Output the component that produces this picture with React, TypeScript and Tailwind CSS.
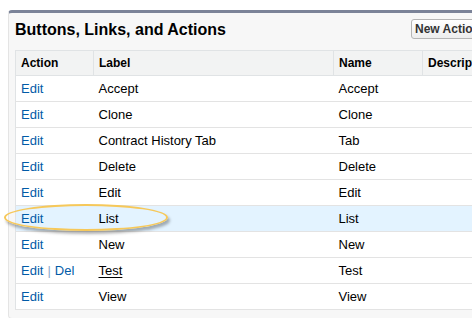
import React from "react";

interface Row {
  label: string;
  name: string;
  del?: boolean;
  underline?: boolean;
  active?: boolean;
}

const rows: Row[] = [
  { label: "Accept", name: "Accept" },
  { label: "Clone", name: "Clone" },
  { label: "Contract History Tab", name: "Tab" },
  { label: "Delete", name: "Delete" },
  { label: "Edit", name: "Edit" },
  { label: "List", name: "List", active: true },
  { label: "New", name: "New" },
  { label: "Test", name: "Test", del: true, underline: true },
  { label: "View", name: "View" },
];

function App() {
  return (
    <div className="relative w-[472px] h-[318px] overflow-hidden bg-white font-['Arial','Liberation_Sans',sans-serif] text-[13px] text-[#000]">
      <div className="ml-2 mt-[10px] w-[560px] rounded-t-[4px] rounded-bl-[4px] border-t-[3px] border-t-[#7b8398] border-x border-b border-[#e4e4e4] bg-[#f7f7f7] pl-[6px] pb-2">
        <div className="flex items-start h-[37px] pt-[6px]">
          <h2 className="w-[396px] mt-[3px] text-[16px] font-bold text-[#000] leading-none">Buttons, Links, and Actions</h2>
          <button className="h-[20px] px-[3px] rounded-[3px] border border-[#b5b5b5] bg-gradient-to-b from-[#ffffff] to-[#ededed] text-[12px] font-bold text-[#333] leading-none whitespace-nowrap">
            New Action
          </button>
        </div>
        <table className="border-collapse bg-white border-l border-[#e0e3e5] table-fixed w-[560px]">
          <thead>
            <tr className="h-[25px] bg-[#f2f3f3] text-[12px] font-bold text-left">
              <th className="w-[78px] pl-[5px] border-y border-[#e0e3e5]">Action</th>
              <th className="w-[240px] pl-[5px] border border-[#e0e3e5]">Label</th>
              <th className="w-[89px] pl-[5px] border border-[#e0e3e5]">Name</th>
              <th className="pl-[5px] border border-[#e0e3e5]">Description</th>
            </tr>
          </thead>
          <tbody>
            {rows.map((r) => (
              <tr key={r.label} className={`h-[26px] border-b border-[#e3e3e3] ${r.active ? "bg-[#e3f3ff]" : "bg-white"}`}>
                <td className="pl-[5px] text-[#015ba7] whitespace-nowrap">
                  Edit
                  {r.del && (
                    <>
                      <span className="text-[#8ea9c9] mx-[4px]">|</span>Del
                    </>
                  )}
                </td>
                <td className="pl-[5px]">
                  <span className={r.underline ? "underline underline-offset-2" : ""}>{r.label}</span>
                </td>
                <td className="pl-[5px]">{r.name}</td>
                <td></td>
              </tr>
            ))}
          </tbody>
        </table>
      </div>
      <div className="absolute left-[4px] top-[204px] w-[164px] h-[27px] rounded-[50%] border-2 border-[#f6c85a] shadow-[2px_3px_3px_rgba(0,0,0,0.3)]"></div>
    </div>
  );
}

export default App;
